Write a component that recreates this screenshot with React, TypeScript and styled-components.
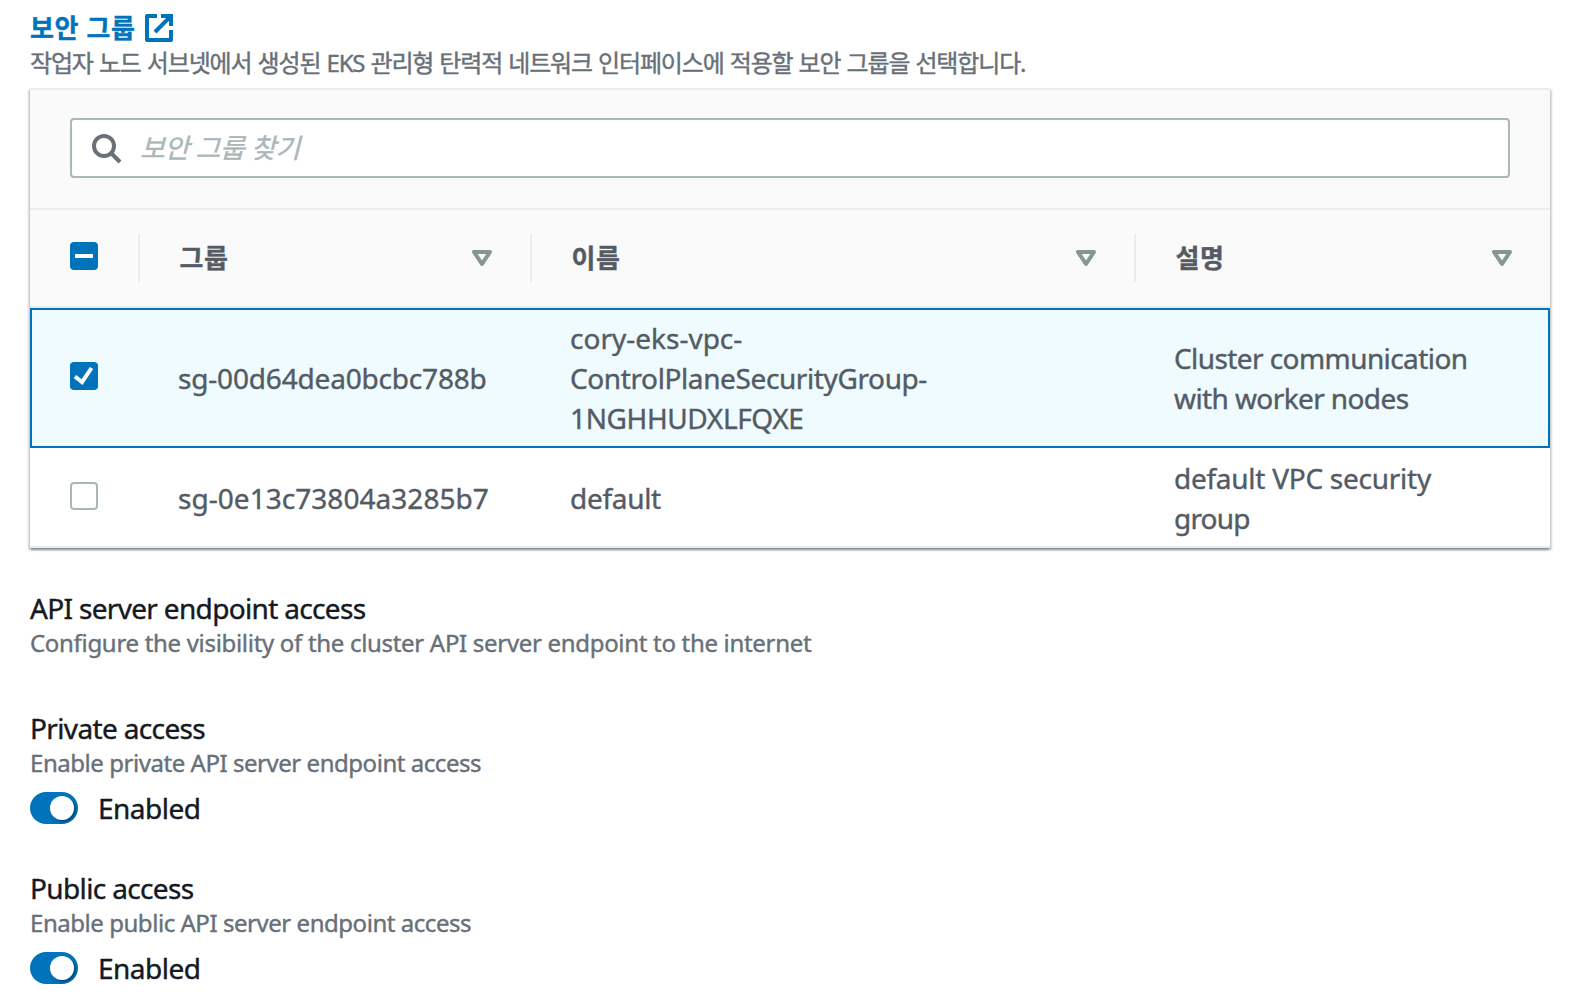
import React from 'react';
import styled, { createGlobalStyle } from 'styled-components';

const GlobalStyle = createGlobalStyle`
  * { box-sizing: border-box; }
  body {
    margin: 0;
    background: #fff;
    color: #16191f;
    font-family: "Noto Sans", "Noto Sans CJK KR", sans-serif;
    font-size: 28px;
    line-height: 40px;
    overflow: hidden;
  }
`;

const Page = styled.main`
  width: 1580px;
  height: 1006px;
  padding: 10px 30px 0;
  overflow: hidden;
`;

const Text = styled.span<{ $ls?: number; $ws?: number }>`
  display: block;
  white-space: nowrap;
  letter-spacing: ${(p) => p.$ls ?? 0}px;
  word-spacing: ${(p) => p.$ws ?? 0}px;
  -webkit-text-stroke: 0.4px currentColor;
`;

const Heading = styled.a`
  display: flex;
  align-items: center;
  gap: 10px;
  height: 36px;
  color: #0073bb;
  font-size: 26px;
  font-weight: 700;
  text-decoration: none;
`;

const Description = styled.div`
  color: #687078;
  font-size: 24px;
  line-height: 30px;
`;

const KoreanDescription = styled(Description)`
  height: 42px;
  padding-top: 2px;
`;

const Panel = styled.section`
  border-top: 2px solid #eaeded;
  background: #fff;
  box-shadow: 0 2px 2px 0 rgba(0, 28, 36, 0.3), 2px 2px 2px 0 rgba(0, 28, 36, 0.15),
    -2px 2px 2px 0 rgba(0, 28, 36, 0.15);
`;

const Toolbar = styled.div`
  height: 120px;
  padding: 28px 40px;
  background: #fafafa;
  border-bottom: 2px solid #eaeded;
`;

const SearchBox = styled.div`
  display: flex;
  align-items: center;
  gap: 18px;
  height: 60px;
  padding-left: 20px;
  background: #fff;
  border: 2px solid #aab7b8;
  border-radius: 4px;
  color: #aab7b8;
  font-size: 27px;
  font-style: italic;

  svg {
    margin-top: 2px;
  }
`;

const Row = styled.div`
  display: grid;
  grid-template-columns: 110px 392px 604px 414px;
  align-items: center;
`;

const HeaderRow = styled(Row)`
  height: 98px;
  background: #fafafa;
  border-bottom: 2px solid #eaeded;
`;

const BodyRow = styled(Row)<{ $selected?: boolean }>`
  height: ${(p) => (p.$selected ? 140 : 100)}px;
  background: ${(p) => (p.$selected ? '#f0fbff' : '#fff')};
  box-shadow: ${(p) => (p.$selected ? 'inset 0 0 0 2px #0073bb' : 'none')};
  border-bottom: ${(p) => (p.$selected ? 'none' : '2px solid #eaeded')};
  padding-top: ${(p) => (p.$selected ? 0 : 2)}px;
  color: #545b64;
`;

const HeaderCell = styled.div<{ $divider?: boolean }>`
  display: flex;
  align-items: center;
  justify-content: space-between;
  height: 48px;
  padding: 0 38px 0 39.5px;
  border-right: ${(p) => (p.$divider ? '2px solid #eaeded' : 'none')};
  color: #545b64;
  font-size: 26px;
  font-weight: 700;
`;

const CheckHeaderCell = styled(HeaderCell)`
  padding: 0 0 4px 40px;
`;

const Cell = styled.div`
  padding-left: 38px;
`;

const CheckCell = styled.div`
  display: flex;
  padding: 0 0 4px 40px;
`;

const Checkbox = styled.span<{ $on?: boolean }>`
  display: flex;
  width: 28px;
  height: 28px;
  border-radius: 4px;
  background: ${(p) => (p.$on ? '#0073bb' : '#fff')};
  border: ${(p) => (p.$on ? 'none' : '2px solid #aab7b8')};
`;

const Section = styled.section<{ $height: number; $gap?: number }>`
  height: ${(p) => p.$height}px;
  margin-top: ${(p) => p.$gap ?? 0}px;
`;

const Label = styled.div`
  height: 40px;
`;

const ToggleRow = styled.div`
  display: flex;
  align-items: center;
  gap: 20px;
  margin-top: 10px;
  height: 40px;
`;

const Toggle = styled.span`
  display: flex;
  align-items: center;
  justify-content: flex-end;
  width: 48px;
  height: 32px;
  padding-right: 4px;
  border-radius: 16px;
  background: #0073bb;
  overflow: hidden;
`;

const Knob = styled.span`
  width: 24px;
  height: 24px;
  border-radius: 50%;
  background: #fff;
  box-shadow: 2px 2px 2px rgba(0, 0, 0, 0.3);
`;

const ExternalIcon = () => (
  <svg width="28" height="28" viewBox="0 0 28 28" fill="none" stroke="#0073bb" strokeWidth="4">
    <path d="M12 2H2v24h24V16" strokeLinejoin="round" />
    <path d="M16 2h10v10M10 18L25 3" />
  </svg>
);

const SearchIcon = () => (
  <svg width="30" height="30" viewBox="0 0 30 30" fill="none" stroke="#687078" strokeWidth="4">
    <circle cx="12" cy="12" r="10" />
    <path d="M19 19l9 9" />
  </svg>
);

const SortIcon = () => (
  <svg width="20" height="16" viewBox="0 0 20 16" fill="none" stroke="#879596" strokeWidth="4" strokeLinejoin="round">
    <path d="M2 2h16l-8 12z" />
  </svg>
);

const CheckMark = () => (
  <svg width="28" height="28" viewBox="0 0 28 28" fill="none" stroke="#fff" strokeWidth="4">
    <path d="M5 14.5l7 5.5L21.5 6" />
  </svg>
);

const MixedMark = () => (
  <svg width="28" height="28" viewBox="0 0 28 28" fill="#fff">
    <path d="M5 12h18v4H5z" />
  </svg>
);

const columns = ['그룹', '이름', '설명'];

type Line = { text: string; ls: number };

const groups: { selected: boolean; id: Line; name: Line[]; description: Line[] }[] = [
  {
    selected: true,
    id: { text: 'sg-00d64dea0bcbc788b', ls: -0.18 },
    name: [
      { text: 'cory-eks-vpc-', ls: 0 },
      { text: 'ControlPlaneSecurityGroup-', ls: -0.39 },
      { text: '1NGHHUDXLFQXE', ls: -0.38 },
    ],
    description: [
      { text: 'Cluster communication', ls: -0.58 },
      { text: 'with worker nodes', ls: -0.6 },
    ],
  },
  {
    selected: false,
    id: { text: 'sg-0e13c73804a3285b7', ls: 0.04 },
    name: [{ text: 'default', ls: -0.3 }],
    description: [
      { text: 'default VPC security', ls: -0.26 },
      { text: 'group', ls: -0.8 },
    ],
  },
];

const toggles = [
  { title: 'Private access', description: 'Enable private API server endpoint access' },
  { title: 'Public access', description: 'Enable public API server endpoint access' },
];

export default function App() {
  return (
    <Page>
      <GlobalStyle />
      <Heading>
        <Text $ls={0.6}>보안 그룹</Text>
        <ExternalIcon />
      </Heading>
      <KoreanDescription>
        <Text $ls={-1.15} $ws={1}>
          작업자 노드 서브넷에서 생성된 EKS 관리형 탄력적 네트워크 인터페이스에 적용할 보안 그룹을 선택합니다.
        </Text>
      </KoreanDescription>
      <Panel>
        <Toolbar>
          <SearchBox>
            <SearchIcon />
            <Text $ls={-0.4}>보안 그룹 찾기</Text>
          </SearchBox>
        </Toolbar>
        <HeaderRow>
          <CheckHeaderCell $divider>
            <Checkbox $on>
              <MixedMark />
            </Checkbox>
          </CheckHeaderCell>
          {columns.map((c, i) => (
            <HeaderCell key={c} $divider={i < 2}>
              <Text $ls={0.5}>{c}</Text>
              <SortIcon />
            </HeaderCell>
          ))}
        </HeaderRow>
        {groups.map((g) => (
          <BodyRow key={g.id.text} $selected={g.selected}>
            <CheckCell>
              <Checkbox $on={g.selected}>{g.selected && <CheckMark />}</Checkbox>
            </CheckCell>
            <Cell>
              <Text $ls={g.id.ls}>{g.id.text}</Text>
            </Cell>
            <Cell>
              {g.name.map((l) => (
                <Text key={l.text} $ls={l.ls}>{l.text}</Text>
              ))}
            </Cell>
            <Cell>
              {g.description.map((l) => (
                <Text key={l.text} $ls={l.ls}>{l.text}</Text>
              ))}
            </Cell>
          </BodyRow>
        ))}
      </Panel>
      <Section $height={120} $gap={40}>
        <Label>
          <Text $ls={-0.67}>API server endpoint access</Text>
        </Label>
        <Description>
          <Text $ls={-0.31}>Configure the visibility of the cluster API server endpoint to the internet</Text>
        </Description>
      </Section>
      {toggles.map((t) => (
        <Section key={t.title} $height={160}>
          <Label>
            <Text $ls={-0.64}>{t.title}</Text>
          </Label>
          <Description>
            <Text $ls={-0.455}>{t.description}</Text>
          </Description>
          <ToggleRow>
            <Toggle>
              <Knob />
            </Toggle>
            <Text $ls={-0.5}>Enabled</Text>
          </ToggleRow>
        </Section>
      ))}
    </Page>
  );
}
